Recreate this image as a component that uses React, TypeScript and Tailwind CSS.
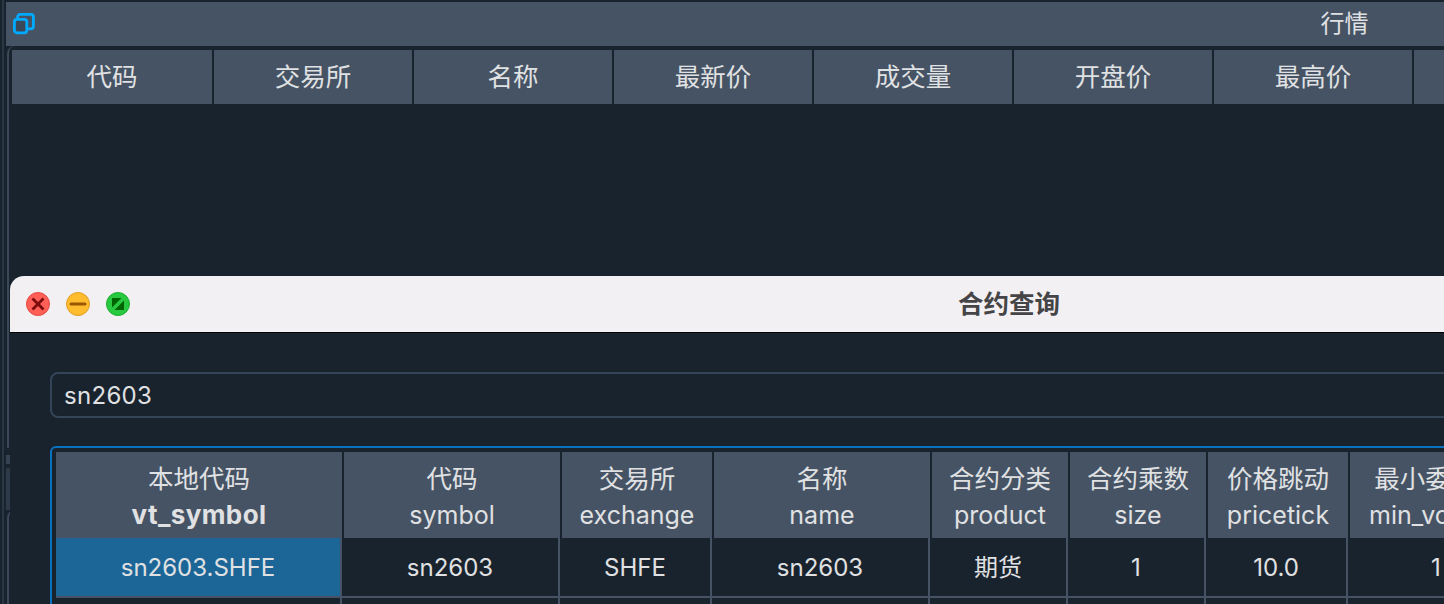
import React from 'react';

const FONT = 'font-["Inter","Noto_Sans_CJK_SC",sans-serif]';

const quoteHeaders = ['代码', '交易所', '名称', '最新价', '成交量', '开盘价', '最高价', '最低价'];

const columns = [
  { zh: '本地代码', en: 'vt_symbol', head: 'w-[288px]', body: 'w-[286px]', value: 'sn2603.SHFE' },
  { zh: '代码', en: 'symbol', head: 'w-[218px]', body: 'w-[218px]', value: 'sn2603' },
  { zh: '交易所', en: 'exchange', head: 'w-[152px]', body: 'w-[152px]', value: 'SHFE' },
  { zh: '名称', en: 'name', head: 'w-[218px]', body: 'w-[218px]', value: 'sn2603' },
  { zh: '合约分类', en: 'product', head: 'w-[138px]', body: 'w-[138px]', value: '期货' },
  { zh: '合约乘数', en: 'size', head: 'w-[138px]', body: 'w-[138px]', value: '1' },
  { zh: '价格跳动', en: 'pricetick', head: 'w-[142px]', body: 'w-[142px]', value: '10.0' },
  { zh: '最小委托量', en: 'min_volume', head: 'w-[178px]', body: 'w-[178px]', value: '1' },
];

const DockIcon = () => (
  <svg width="22" height="22" viewBox="0 0 22 22" fill="none" stroke="#00AAFF" strokeWidth="2.8">
    <rect x="4.6" y="1.4" width="15.8" height="14.4" rx="2.5" />
    <rect x="1.4" y="6.4" width="12.4" height="13.4" rx="2.5" fill="#3A4859" />
  </svg>
);

const TrafficLights = () => (
  <div className="flex items-center gap-4">
    <svg width="24" height="24" viewBox="0 0 24 24">
      <circle cx="12" cy="12" r="11.5" fill="#FF5F57" stroke="#E14942" />
      <path d="M6.5 6.5l11 11M17.5 6.5l-11 11" stroke="#7A0C0C" strokeWidth="2.8" />
    </svg>
    <svg width="24" height="24" viewBox="0 0 24 24">
      <circle cx="12" cy="12" r="11.5" fill="#FEBC2E" stroke="#DF9F27" />
      <path d="M5 12h14" stroke="#985700" strokeWidth="3" strokeLinecap="round" />
    </svg>
    <svg width="24" height="24" viewBox="0 0 24 24">
      <circle cx="12" cy="12" r="11.5" fill="#28C840" stroke="#1FAD33" />
      <path d="M6 6h9.5L6 15.5zM18 18H8.5L18 8.5z" fill="#006500" />
    </svg>
  </div>
);

const ContractDialog = () => (
  <div className="absolute left-[10px] top-[276px] w-[1982px] h-[400px] flex flex-col bg-[#19232D]">
    <div className="h-[57px] shrink-0 rounded-t-[14px] bg-[#F2F0F3] border-b border-black grid grid-cols-[1fr_auto_1fr] items-center pl-4">
      <TrafficLights />
      <span className="text-[25.5px] font-semibold text-[#454446]">合约查询</span>
      <span />
    </div>
    <div className="px-10 pt-[39px]">
      <div className="h-[46px] border-2 border-[#344558] rounded-lg flex items-center px-3 pt-px text-[24px] tracking-[0.3px] text-[#E0E1E3]">
        sn2603
      </div>
      <div className="mt-7 border-2 border-[#0A72BE] rounded-md pt-1 pl-1 text-[#E0E1E3] text-[24px]">
        <div className="flex h-[86px]">
          {columns.map((col, i) => (
            <div key={col.en} className={`${col.head} shrink-0 pr-0.5`}>
              <div className="h-full bg-[#455364] flex flex-col items-center justify-center pt-1 leading-[36px]">
                <span className="text-[25.5px]">{col.zh}</span>
                <span className={i === 0 ? 'font-bold text-[26px] tracking-[0.4px]' : 'text-[25px]'}>{col.en}</span>
              </div>
            </div>
          ))}
        </div>
        <div className="flex h-[60px] border-b-2 border-[#455364]">
          {columns.map((col, i) => (
            <div
              key={col.en}
              className={`${col.body} shrink-0 border-r-2 border-[#455364] flex items-center justify-center pt-px ${
                i === 0 ? 'bg-[#1C6697]' : ''
              }`}
            >
              {col.value}
            </div>
          ))}
        </div>
        <div className="flex h-[60px]">
          {columns.map((col) => (
            <div key={col.en} className={`${col.body} shrink-0 border-r-2 border-[#455364]`} />
          ))}
        </div>
      </div>
    </div>
  </div>
);

export default function App() {
  return (
    <div className={`relative w-[1444px] h-[604px] overflow-hidden bg-[#19232D] flex ${FONT}`}>
      {/* left window edge */}
      <div className="w-[6px] shrink-0 h-full pl-0.5 flex">
        <div className="w-0.5 h-full bg-[#2A3846]" />
      </div>

      <div className="flex-1 min-w-0 flex flex-col">
        <div className="mt-0.5 h-[44px] w-[2670px] shrink-0 bg-[#455364] grid grid-cols-[1fr_auto_1fr] items-center pl-[7px] text-[24px] text-[#E0E1E3]">
          <DockIcon />
          <span>行情</span>
          <span />
        </div>

        <div className="h-[402px] shrink-0 ml-px border-l-2 border-[#3A4859] rounded-tl-lg pt-1 pl-[3px]">
          <div className="flex h-[54px] w-[2002px]">
            {quoteHeaders.map((h, i) => (
              <div
                key={h}
                className={`${i === 0 ? 'w-[202px]' : 'w-[200px]'} shrink-0 border-r-2 border-[#19232D] bg-[#455364] flex items-center justify-center text-[25.5px] text-[#E0E1E3]`}
              >
                {h}
              </div>
            ))}
          </div>
        </div>

        {/* docked tab edges */}
        <div className="mt-[7px] h-[9px] w-1 bg-[#344252]" />
        <div className="mt-[4px] h-[42px] w-1 bg-[#2C3A49]" />
        <div className="flex-1 ml-px border-l-2 border-[#3A4859] rounded-tl-lg" />
      </div>

      <ContractDialog />
    </div>
  );
}
